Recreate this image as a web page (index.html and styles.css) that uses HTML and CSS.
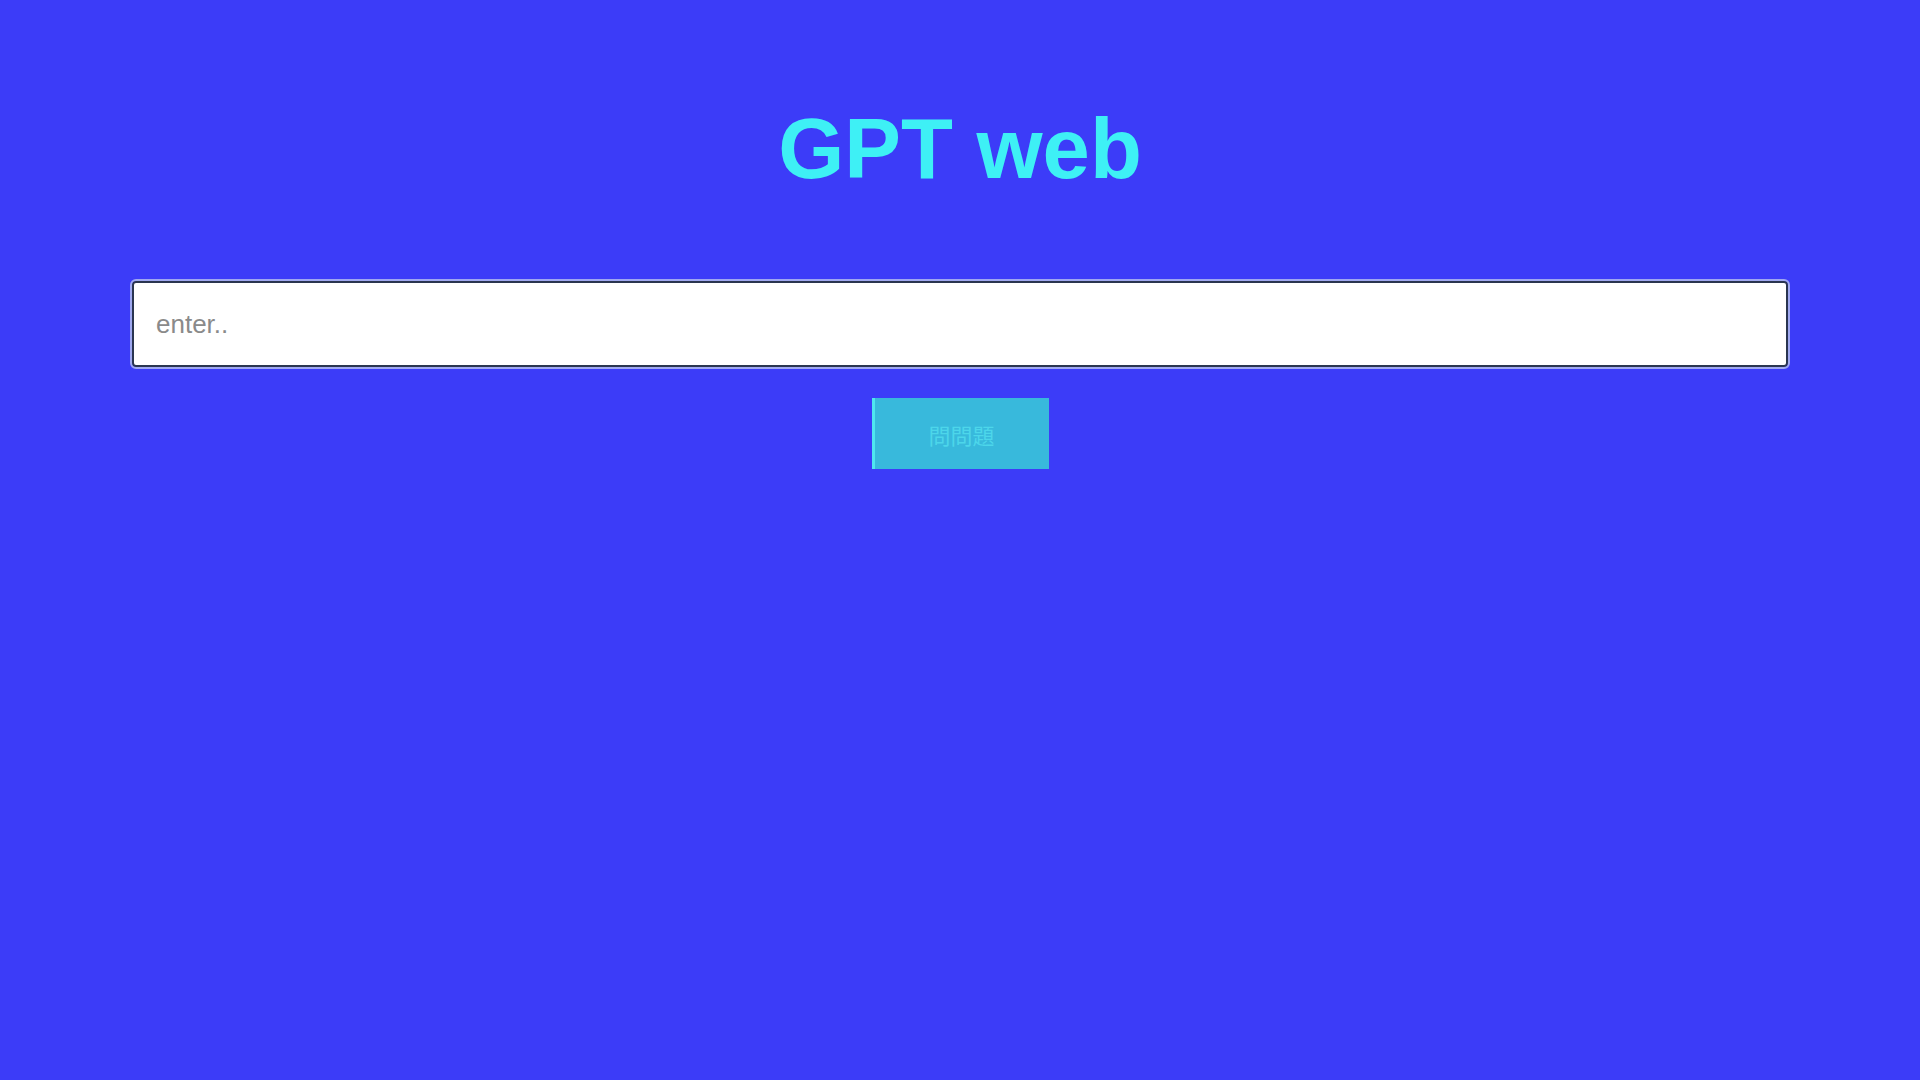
FILE: index.html
```
<!DOCTYPE html>
<html lang="en">
<head>
    <meta charset="UTF-8">
    <meta name="viewport" content="width=device-width, initial-scale=1.0">
    <title>GPT web</title>
    <link rel="stylesheet" href="styles.css">
</head>
<body>
    <div class="container">
        <h1 class="title">GPT web</h1>
        <input type="text" id="question" class="question" placeholder="enter.." autofocus>
        <button id="askBtn" class="ask-btn">問問題</button>
    </div>
</body>
</html>
```

FILE: styles.css
```
body {
    font-family: "Liberation Sans", Arial, "Noto Sans CJK TC", sans-serif;
    background-color: #3c3cf8;
    margin: 0;
    padding: 0;
}
.container {
    display: flex;
    flex-direction: column;
    align-items: center;
    padding-top: 101px;
}
.title {
    color: #3ef0f5;
    font-size: 85px;
    font-weight: bold;
    margin: 0 0 84px 0;
    line-height: 96px;
}
.question {
    box-sizing: border-box;
    width: 1656px;
    height: 86px;
    padding: 0 22px;
    font-size: 26px;
    font-family: "Liberation Sans", Arial, sans-serif;
    border: 2px solid #2a3550;
    border-radius: 4px;
    outline: 2px solid #9fa8f0;
    background: #ffffff;
    color: #333;
}
.question::placeholder {
    color: #8a8a8a;
}
.ask-btn {
    margin-top: 31px;
    width: 177px;
    height: 71px;
    background-color: #38b9dc;
    border: none;
    border-left: 3px solid #4fe6f0;
    color: #4cd6ea;
    font-size: 22px;
    font-family: "Noto Sans CJK TC", sans-serif;
}
```
